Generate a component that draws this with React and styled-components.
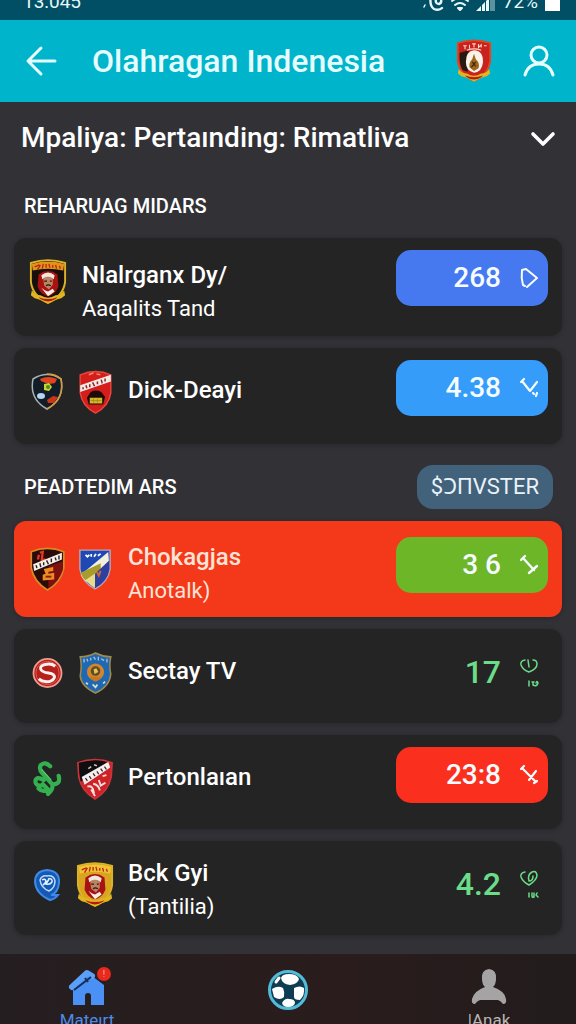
import React from 'react';
import styled, { createGlobalStyle } from 'styled-components';

const GlobalStyle = createGlobalStyle`
  * {
    box-sizing: border-box;
  }
  body {
    margin: 0;
    background: #323136;
    color: #ffffff;
    font-family: Roboto, 'Noto Sans', 'Liberation Sans', sans-serif;
  }
  button {
    border: 0;
    padding: 0;
    background: none;
    color: inherit;
    font: inherit;
    cursor: pointer;
  }
  svg {
    display: block;
    flex: none;
  }
`;

const Page = styled.div`
  display: flex;
  flex-direction: column;
  height: 100vh;
  overflow: hidden;
`;

const StatusBar = styled.div`
  display: flex;
  flex: none;
  align-items: flex-end;
  justify-content: space-between;
  height: 20px;
  padding: 0 16px 8px 23px;
  overflow: hidden;
  background: #004f64;
  color: #e8f8fb;
  font-size: 19px;
  line-height: 20px;
`;

const StatusIcons = styled.div`
  display: flex;
  align-items: flex-end;
  gap: 7px;
`;

const AppBar = styled.header`
  display: flex;
  flex: none;
  align-items: center;
  height: 82px;
  padding: 0 20px 0 24px;
  background: #00b4cb;
  color: #e6fdff;
`;

const AppTitle = styled.h1`
  flex: 1;
  margin: 0 0 0 34px;
  font-size: 32px;
  font-weight: 500;
  line-height: 40px;
`;

const AppBarActions = styled.div`
  display: flex;
  align-items: center;
  gap: 30px;
`;

const Main = styled.main`
  flex: 1 0 auto;
  padding: 0 14px 19px;
`;

const LeaguePicker = styled.button`
  display: flex;
  align-items: center;
  justify-content: space-between;
  width: 100%;
  height: 72px;
  padding: 0 6px 0 7px;
  text-align: left;
`;

const LeagueName = styled.span`
  font-size: 28px;
  font-weight: 500;
  line-height: 36px;
`;

const SectionHeader = styled.div`
  display: flex;
  align-items: center;
  justify-content: space-between;
  height: ${({ $tall }) => ($tall ? '77px' : '64px')};
  padding: ${({ $tall }) => ($tall ? '8px' : '0')} 9px 0 10px;
`;

const SectionTitle = styled.h2`
  margin: 0;
  font-size: 20px;
  font-weight: 500;
  line-height: 24px;
`;

const FilterButton = styled.button`
  height: 44px;
  padding: 0 14px;
  border-radius: 16px;
  background: #42627b;
  color: #e9f3f8;
  font-size: 22px;
  line-height: 28px;
`;

const MatchList = styled.ul`
  display: grid;
  gap: 12px;
  margin: 0;
  padding: 0;
  list-style: none;
`;

const MatchCard = styled.li`
  display: flex;
  align-items: flex-start;
  gap: 15px;
  min-height: ${({ $height }) => $height}px;
  padding: ${({ $live }) => ($live ? 16 : 12)}px 14px 0 15px;
  border-radius: 12px;
  background: ${({ $live }) => ($live ? '#f4391b' : '#252424')};
  color: ${({ $live }) => ($live ? '#ffe3d6' : '#ffffff')};
  box-shadow: 0 1px 4px rgba(20, 20, 24, 0.35);
`;

const Crests = styled.div`
  display: flex;
  gap: 12px;
  padding-top: 8px;
`;

const CrestSlot = styled.div`
  display: flex;
  align-items: center;
  justify-content: center;
  width: 36px;
  height: 48px;

  &:only-child {
    width: 38px;
  }
`;

const Names = styled.div`
  flex: 1;
  min-width: 0;
  padding-top: ${({ $top }) => $top}px;
`;

const TeamName = styled.div`
  font-size: 24px;
  font-weight: 500;
  line-height: 34px;
`;

const TeamNote = styled.div`
  font-size: 22px;
  line-height: 34px;
`;

const Score = styled.button`
  display: flex;
  align-items: center;
  justify-content: flex-end;
  gap: 18px;
  width: 152px;
  height: ${({ $fill }) => ($fill ? '56px' : '62px')};
  padding-right: 9px;
  border-radius: 15px;
  background: ${({ $fill }) => $fill || 'transparent'};
  color: ${({ $fill }) => ($fill ? '#f6fcff' : '#6bdc88')};
  font-size: ${({ $fill }) => ($fill ? '28px' : '32px')};
  font-weight: 500;
  line-height: 36px;
`;

const BottomNav = styled.nav`
  display: flex;
  flex: none;
  justify-content: space-between;
  height: 84px;
  padding: 14px 55px 0;
  background: linear-gradient(90deg, #251e20, #2a1c1d 60%, #221c1c);
`;

const NavItem = styled.button`
  display: flex;
  flex-direction: column;
  align-items: center;
  width: 64px;
  color: ${({ $active }) => ($active ? '#4f8be6' : '#b9b6b6')};
  font-size: 17px;
  line-height: 20px;
`;

const NavIcon = styled.span`
  position: relative;
  display: block;
  height: 42px;
`;

const Alert = styled.span`
  position: absolute;
  top: -1px;
  right: -5px;
  width: 14px;
  height: 14px;
  border-radius: 50%;
  background: #e8291c;
  color: #ffb9a8;
  font-size: 9px;
  line-height: 14px;
  text-align: center;
`;

const SHIELD = 'M2 4 Q20 -2 38 4 L38 24 Q36 39 20 46 Q4 39 2 24 Z';

const Ribbon = () => (
  <>
    <path d="M3 33 Q7 38 12 38 Q20 43 28 38 Q33 38 37 33 L38 38 L34 41 Q28 42 20 47 Q12 42 6 41 L2 38 Z" fill="#e3b51f" />
    <path d="M10 40 Q20 44 30 40 L28 42 Q20 47 12 42 Z" fill="#b21a12" />
  </>
);

const GoldCrest = ({ light, width = 38 }) => (
  <svg width={width} height="46" viewBox="0 0 40 48" aria-hidden="true">
    <path d={SHIELD} fill={light ? '#d9a520' : '#17110c'} stroke="#dcb226" strokeWidth="2" />
    <path d="M3 5 Q20 0 37 5 L36 12 Q20 8 4 12 Z" fill={light ? '#efc535' : '#e2931c'} />
    <path d="M6 8 L11 6 M9 11 L12 6 M14 10 L15 5 M18 9 V5 M22 9 L21 5 M25 9 V6 M29 10 L28 6 M33 10 L32 7" stroke="#bd2512" strokeWidth="1.4" />
    <path d="M10 16 Q20 9 30 16 L31 29 Q27 38 20 39 Q13 38 9 29 Z" fill="#a81212" />
    <path d="M13 17 Q20 11 27 17 L26 21 Q20 17 14 21 Z" fill="#f2e7dc" />
    <path d="M15 20 Q20 17 25 20 L25 27 L21 32 L16 28 Z" fill="#b98364" />
    <path d="M16 23 H19 M22 23 H24 M18 28 Q20 26 23 28" stroke="#35130d" strokeWidth="1.4" fill="none" />
    <path d="M13 30 L17 33 L20 34 L25 31 L27 34 L20 39 Z" fill="#f5eee5" />
    <Ribbon />
  </svg>
);

const RedClubCrest = () => (
  <svg width="36" height="46" viewBox="0 0 40 48" aria-hidden="true">
    <path d={SHIELD} fill="#c9211d" stroke="#e2481f" strokeWidth="2" />
    <path d="M4 15 L14 12 L13 36 L7 34 Q4 28 4 20 Z" fill="#251b12" />
    <path d="M8 7 H12 M10 7 V11 M15 6 V10 M18 5 H22 M20 5 V9 M25 5 V9 L28 6 V9 M31 7 H34 M12 12 Q20 9 28 12" stroke="#ffd9c4" strokeWidth="1.2" fill="none" />
    <path d="M20 12 Q30 12 30 25 Q29 36 20 37 Q11 35 11 25 Q11 13 20 12 Z" fill="#fbf3ea" />
    <path d="M20 16 L22 22 Q27 26 25 32 L20 35 L15 31 Q14 26 18 22 Z" fill="#9b6a1d" />
    <path d="M18 25 L22 30 M22 25 L17 31" stroke="#4b250d" strokeWidth="1.4" />
    <Ribbon />
  </svg>
);

const NightCrest = () => (
  <svg width="32" height="38" viewBox="0 0 32 38" aria-hidden="true">
    <path d="M2 6 Q16 -3 30 6 Q34 26 16 36 Q-2 26 2 6 Z" fill="#121d28" stroke="#a9b3b7" strokeWidth="1.5" />
    <path d="M16 1 Q25 1 30 6 Q34 26 16 36" fill="none" stroke="#d79b38" strokeWidth="1.5" />
    <path d="M9 6 Q17 2 26 6 L24 10 Q17 12 10 8 Z" fill="#e2451d" />
    <path d="M13 11 L18 10 L21 14 L18 18 L13 17 Z" fill="#c8d733" />
    <circle cx="17" cy="14" r="2" fill="#4e8a21" />
    <ellipse cx="10" cy="23" rx="4" ry="3" fill="#b7d5ee" />
    <path d="M16 27 L22 23 L27 24 L23 30 L17 30 Z" fill="#cc3518" />
  </svg>
);

const RedBandCrest = () => (
  <svg width="35" height="44" viewBox="0 0 36 46" aria-hidden="true">
    <path d="M2 5 Q18 -2 34 5 L34 24 Q32 38 18 45 Q4 38 2 24 Z" fill="#d51e1c" stroke="#e8473b" strokeWidth="1.5" />
    <path d="M2 16 L34 5 V12 L2 23 Z" fill="#f3e9e7" />
    <path d="M5 18 V20 M8 16 L9 19 M12 15 V18 M15 13 L17 17 M20 12 V15 M24 10 L25 14 M28 9 V12" stroke="#8f2523" strokeWidth="1.6" />
    <path d="M9 29 L13 23 Q18 20 24 23 L28 28 L26 36 H11 Z" fill="#1c0b09" />
    <rect x="12" y="29" width="13" height="6" fill="#d6b92a" />
    <path d="M13 32 H24 M16 30 V34 M20 30 V34" stroke="#a88b1b" strokeWidth="1" />
    <path d="M11 5 L16 3 M19 4 L23 5" stroke="#ff8b6c" strokeWidth="1.5" />
  </svg>
);

const BlackBandCrest = () => (
  <svg width="37" height="44" viewBox="0 0 38 46" aria-hidden="true">
    <path d="M2 5 Q19 -2 36 5 L36 22 Q33 37 19 45 Q5 37 2 22 Z" fill="#2b0a0a" stroke="#d98a25" strokeWidth="1.8" />
    <path d="M20 20 L35 15 V24 Q31 36 20 43 Z" fill="#7f1010" />
    <path d="M11 6 L14 5 L13 14 L17 13 M9 13 L10 8" stroke="#e43a25" strokeWidth="2.4" fill="none" />
    <path d="M4 18 L34 6 V13 L5 25 Z" fill="#f4efe9" />
    <path d="M7 19 L8 22 M11 17 L12 21 M15 16 V19 M18 14 L20 18 M23 12 V16 M27 11 L28 14 M31 9 V13" stroke="#2a2020" strokeWidth="1.5" />
    <path d="M15 23 L25 21 V25 L20 26 V28 L26 27 V34 L14 35 V29 L17 28 Z" fill="#ee8b24" />
    <path d="M17 31 H23" stroke="#8a1d0b" strokeWidth="2" />
  </svg>
);

const BlueSashCrest = () => (
  <svg width="34" height="42" viewBox="0 0 36 44" aria-hidden="true">
    <path d="M2 2 H34 V22 Q32 36 18 43 Q4 36 2 22 Z" fill="#1e49b5" stroke="#b9a6b8" strokeWidth="1.5" />
    <path d="M3 28 L32 4 L33 17 L10 36 Q5 33 3 28 Z" fill="#f2f0dd" />
    <path d="M3 26 L24 16 L24 23 L8 34 Q4 31 3 26 Z" fill="#a99c2d" />
    <path d="M18 27 L33 13 V23 Q31 35 18 42 Z" fill="#2f3f9d" />
    <path d="M8 34 L18 27 V42 Q12 39 8 34 Z" fill="#e8dc8a" />
    <path d="M8 7 L10 9 L12 7 M14 9 V6 M17 9 L19 6 M21 8 L24 6" stroke="#ffffff" strokeWidth="1.8" fill="none" />
    <path d="M20 25 L22 29 L24 24" stroke="#cf6934" strokeWidth="2" fill="none" />
  </svg>
);

const RoundSCrest = () => (
  <svg width="31" height="32" viewBox="0 0 32 32" aria-hidden="true">
    <circle cx="16" cy="16" r="14.5" fill="#b51f1e" stroke="#ef9d8e" strokeWidth="1.8" />
    <circle cx="16" cy="16" r="12" fill="none" stroke="#e05a4c" strokeWidth="1" />
    <path d="M24 9 Q20 6 15 7 Q8 8 9 12 Q10 15 17 16 Q24 17 23 21 Q21 25 15 25 Q10 25 7 22" fill="none" stroke="#fff1ec" strokeWidth="3" />
  </svg>
);

const BlueLionCrest = () => (
  <svg width="35" height="42" viewBox="0 0 36 44" aria-hidden="true">
    <path d="M2 5 Q10 5 18 1 Q26 5 34 5 Q32 14 34 23 Q33 36 18 43 Q3 36 2 25 Q4 14 2 5 Z" fill="#1f69b4" stroke="#a18a4b" strokeWidth="1.6" />
    <path d="M6 7 V11 M9 7 L10 10 M13 6 V9 M16 5 L18 8 M21 5 V9 M24 7 L27 9 M30 7 V11" stroke="#a9bfd2" strokeWidth="1.4" />
    <circle cx="18" cy="21" r="9" fill="#d2862a" />
    <path d="M12 26 Q18 36 24 26 Z" fill="#c87722" />
    <circle cx="18" cy="20" r="5" fill="#5d4b2c" />
    <path d="M16 18 L19 17 L21 21 L17 23 Z" fill="#ecc24b" />
    <path d="M8 32 L10 34 M15 34 L18 37 L20 34 M26 33 L28 31" stroke="#d8dfc9" strokeWidth="1.8" fill="none" />
  </svg>
);

const GreenKnot = () => (
  <svg width="30" height="36" viewBox="0 0 28 34" aria-hidden="true">
    <path
      d="M17 5 Q12 0 8 4 Q6 8 10 12 L19 22 Q20 27 15 31 M25 14 Q27 22 20 22 M11 18 Q4 14 3 19 Q3 24 9 23 M6 26 Q10 30 15 27 L10 22"
      fill="none"
      stroke="#35b050"
      strokeWidth="4"
      strokeLinecap="round"
      strokeLinejoin="round"
    />
    <path d="M9 8 L18 18" fill="none" stroke="#62d178" strokeWidth="1" />
  </svg>
);

const BlackRedCrest = () => (
  <svg width="38" height="42" viewBox="0 0 40 44" aria-hidden="true">
    <path d="M2 5 Q20 -2 38 5 L37 20 Q34 35 20 43 Q6 35 3 20 Z" fill="#cf2226" stroke="#c9353a" strokeWidth="1.8" />
    <path d="M3 5 Q20 0 33 4 L5 25 Q3 17 3 5 Z" fill="#0f0d0f" />
    <path d="M6 20 L34 4 L36 10 L9 28 Z" fill="#f4eeee" />
    <path d="M10 21 L12 24 M14 19 L16 22 M18 16 L20 19 M22 14 L24 17 M26 11 L28 14 M30 9 L32 12" stroke="#3a2226" strokeWidth="1.3" />
    <path d="M12 30 Q18 28 19 37 M18 27 Q24 28 25 34 M24 23 L26 29 L31 26 M28 19 L32 18 M16 33 L20 40" stroke="#f7dede" strokeWidth="2" fill="none" />
    <path d="M13 11 L16 9 M19 7 L22 8" stroke="#c9c4c4" strokeWidth="1.6" />
  </svg>
);

const BluePinCrest = () => (
  <svg width="28" height="34" viewBox="0 0 28 34" aria-hidden="true">
    <path d="M14 2 Q27 3 26 15 Q25 25 18 27 L25 27 Q22 31 17 32 Q3 26 2 14 Q2 3 14 2 Z" fill="#1559b5" stroke="#3d8ae8" strokeWidth="2" />
    <path d="M7 12 Q9 7 14 8 Q21 7 22 13 Q22 20 16 23 Q8 20 7 12 Z" fill="none" stroke="#b9dcfb" strokeWidth="1.5" />
    <path d="M9 12 Q12 10 13 13 Q12 16 10 17 M15 11 Q20 10 19 14 Q17 17 13 16 L16 11" fill="none" stroke="#e6f4ff" strokeWidth="1.5" />
  </svg>
);

const stroke = { fill: 'none', stroke: 'currentColor', strokeLinecap: 'round', strokeLinejoin: 'round' };

const PlayMark = () => (
  <svg width="20" height="24" viewBox="0 0 20 24" strokeWidth="2" {...stroke}>
    <path d="M4 19 Q2 12 3 4 L7 3 L18 12 L8 21 M4 19 L6 20" />
  </svg>
);

const TickMark = () => (
  <svg width="20" height="24" viewBox="0 0 20 24" strokeWidth="2.2" {...stroke}>
    <path d="M2 6 L5 3 M3 5 L11 15 L18 6 M14 17 L15 18 M18 17 L17 20" />
  </svg>
);

const BarMark = () => (
  <svg width="20" height="24" viewBox="0 0 20 24" strokeWidth="2.4" {...stroke}>
    <path d="M2 7 L6 3 M4 5 L15 17 M10 20 L18 13" />
  </svg>
);

const CrossMark = () => (
  <svg width="20" height="24" viewBox="0 0 20 24" strokeWidth="2.2" {...stroke}>
    <path d="M2 6 L5 3 M3 5 L17 19 M10 17 L17 8 M15 20 L18 18" />
  </svg>
);

const HeartMark = ({ looped }) => (
  <svg width="20" height="30" viewBox="0 0 20 30" strokeWidth="1.5" {...stroke}>
    <path d={looped ? 'M6 3 Q1 4 2 8 Q4 13 10 16 Q18 11 18 6 Q17 1 13 3 Q8 6 10 12 Q14 12 14 7' : 'M6 3 Q1 4 2 8 Q4 13 10 15 Q18 12 18 7 Q18 3 14 3 M9 3 L10 10'} />
    <path d={looped ? 'M10 24 V28 M13 24 V27 Q13 29 15 28 V24 M18 24 L17 26 L19 28' : 'M10 24 V29 M13 25 H15 M14 25 V28 Q18 30 19 26 Q18 23 17 26'} />
  </svg>
);

const sections = [
  {
    title: 'REHARUAG MIDARS',
    matches: [
      { height: 98, crests: [GoldCrest], name: 'Nlalrganx Dy/', note: 'Aaqalits Tand', top: 8, score: '268', fill: '#4678f0', Mark: PlayMark },
      { height: 96, crests: [NightCrest, RedBandCrest], name: 'Dick-Deayi', top: 13, score: '4.38', fill: '#359cfa', Mark: TickMark },
    ],
  },
  {
    title: 'PEADTEDIM ARS',
    filter: '$ƆПVSTER',
    matches: [
      { height: 96, live: true, crests: [BlackBandCrest, BlueSashCrest], name: 'Chokagjas', note: 'Anotalk)', top: 3, score: '3 6', fill: '#6db628', Mark: BarMark },
      { height: 94, crests: [RoundSCrest, BlueLionCrest], name: 'Sectay TV', top: 13, score: '17', Mark: HeartMark },
      { height: 94, crests: [GreenKnot, BlackRedCrest], name: 'Pertonlaıan', top: 13, score: '23:8', fill: '#fb2f1d', Mark: CrossMark },
      { height: 94, crests: [BluePinCrest, () => <GoldCrest light />], name: 'Bck Gyi', note: '(Tantilia)', top: 3, score: '4.2', Mark: () => <HeartMark looped /> },
    ],
  },
];

const Match = ({ match }) => {
  const { Mark } = match;
  return (
    <MatchCard $height={match.height} $live={match.live}>
      <Crests>
        {match.crests.map((Crest, i) => (
          <CrestSlot key={i}>
            <Crest />
          </CrestSlot>
        ))}
      </Crests>
      <Names $top={match.top}>
        <TeamName>{match.name}</TeamName>
        {match.note && <TeamNote>{match.note}</TeamNote>}
      </Names>
      <Score type="button" $fill={match.fill}>
        {match.score}
        <Mark />
      </Score>
    </MatchCard>
  );
};

const StatusGlyphs = () => (
  <StatusIcons>
    <svg width="22" height="20" viewBox="0 0 22 20" {...stroke} strokeWidth="2.4">
      <path d="M9 3 Q7 14 12 17 Q17 19 20 16 M14 7 Q13 12 17 12 Q20 11 19 7" />
      <path d="M2 15 L3 13" strokeWidth="1.5" />
    </svg>
    <svg width="18" height="20" viewBox="0 0 18 20" {...stroke} strokeWidth="2">
      <path d="M1 9 Q9 3 17 9 M4 13 Q9 9 14 13" />
      <path d="M7 16 L9 18 L11 16 Z" fill="currentColor" />
    </svg>
    <svg width="20" height="20" viewBox="0 0 20 20" fill="currentColor">
      <path d="M0 19 L5 14 V19 Z M6 13 L9 10 V19 H6 Z M10 9 L13 6 V19 H10 Z" />
      <path d="M14 5 L19 1 V19 H14 Z" opacity="0.4" />
    </svg>
    72%
    <svg width="15" height="20" viewBox="0 0 15 20" fill="#ffffff">
      <path d="M0 0 H15 V19 H0 Z" />
    </svg>
  </StatusIcons>
);

const HomeIcon = () => (
  <svg width="38" height="42" viewBox="0 0 38 42" aria-hidden="true">
    <path d="M5 18 L20 5 L36 17 V37 H23 V28 Q23 25 20 25 Q17 25 17 28 V37 H5 Z" fill="#4a90f5" />
    <path d="M4 19 L19 5 L24 8" fill="none" stroke="#5aa0fa" strokeWidth="6" strokeLinecap="round" strokeLinejoin="round" />
    <path d="M6 22 L23 9 M17 10 L20 14" stroke="#172d57" strokeWidth="2" />
  </svg>
);

const BallIcon = () => (
  <svg width="42" height="42" viewBox="0 0 42 42" aria-hidden="true">
    <circle cx="21" cy="22" r="18.5" fill="#0f3c52" stroke="#52bcd8" strokeWidth="3" />
    <path d="M14 10 Q15 6 22 6 Q30 6 32 11 Q31 16 23 17 Q15 16 14 10 Z" fill="#ffffff" />
    <path d="M5 21 Q11 17 16 20 Q18 24 17 29 Q13 33 7 29 Z" fill="#ffffff" />
    <path d="M27 20 Q33 17 37 20 Q38 27 33 32 Q27 32 27 29 Z" fill="#ffffff" />
    <path d="M15 35 Q18 30 22 31 Q28 31 28 35 Q27 39 21 39 Q16 39 15 35 Z" fill="#ffffff" />
    <path d="M9 14 L12 10" stroke="#ffffff" strokeWidth="3" strokeLinecap="round" />
  </svg>
);

const PersonIcon = () => (
  <svg width="36" height="42" viewBox="0 0 36 42" aria-hidden="true">
    <path d="M18 1 Q26 2 25 11 Q25 16 22 19 Q34 23 35 31 Q36 36 32 36 Q30 33 27 32 H9 Q6 33 4 36 Q0 36 1 31 Q3 23 14 19 Q11 16 11 11 Q10 2 18 1 Z" fill="#a5a3a4" />
  </svg>
);

const App = () => (
  <>
    <GlobalStyle />
    <Page>
      <StatusBar>
        <span>13:045</span>
        <StatusGlyphs />
      </StatusBar>
      <AppBar>
        <button type="button" aria-label="Back">
          <svg width="34" height="34" viewBox="0 0 34 34" {...stroke} strokeWidth="3">
            <path d="M17 4 L4 17 L17 30 M4 17 H31" />
          </svg>
        </button>
        <AppTitle>Olahragan Indenesia</AppTitle>
        <AppBarActions>
          <RedClubCrest />
          <button type="button" aria-label="Profile">
            <svg width="34" height="34" viewBox="0 0 34 34" {...stroke} strokeWidth="3">
              <circle cx="17" cy="11" r="8" />
              <path d="M3 31 Q6 20 17 20 Q28 20 31 31" />
            </svg>
          </button>
        </AppBarActions>
      </AppBar>
      <Main>
        <LeaguePicker type="button">
          <LeagueName>Mpaliya: Pertaınding: Rimatliva</LeagueName>
          <svg width="26" height="26" viewBox="0 0 26 26" {...stroke} strokeWidth="3.6">
            <path d="M3 9 L13 19 L23 9" />
          </svg>
        </LeaguePicker>
        {sections.map((section) => (
          <section key={section.title}>
            <SectionHeader $tall={Boolean(section.filter)}>
              <SectionTitle>{section.title}</SectionTitle>
              {section.filter && <FilterButton type="button">{section.filter}</FilterButton>}
            </SectionHeader>
            <MatchList>
              {section.matches.map((match) => (
                <Match key={match.name} match={match} />
              ))}
            </MatchList>
          </section>
        ))}
      </Main>
      <BottomNav>
        <NavItem type="button" $active>
          <NavIcon>
            <HomeIcon />
            <Alert>!</Alert>
          </NavIcon>
          Mateırt
        </NavItem>
        <NavItem type="button" aria-label="Matches">
          <NavIcon>
            <BallIcon />
          </NavIcon>
        </NavItem>
        <NavItem type="button">
          <NavIcon>
            <PersonIcon />
          </NavIcon>
          |Anak
        </NavItem>
      </BottomNav>
    </Page>
  </>
);

export default App;
